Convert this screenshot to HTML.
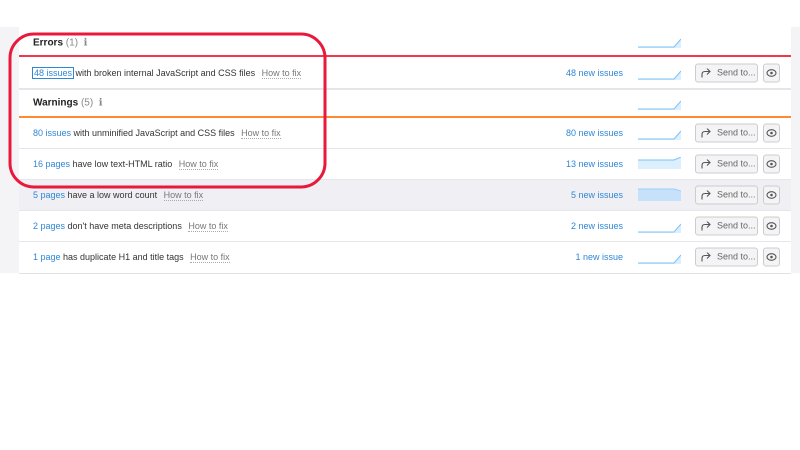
<!DOCTYPE html>
<html><head><style>
body{margin:0;width:800px;height:450px;background:#fff;font-family:"Liberation Sans",sans-serif;position:relative;overflow:hidden}
.bgL{position:absolute;left:0;top:27px;width:19px;height:246px;background:#f4f4f7}
.bgR{position:absolute;left:791px;top:27px;width:9px;height:246px;background:#f4f4f7}
.card{position:absolute;left:19px;top:27px;width:772px;height:246px;background:#fff;border-bottom:1px solid #e2e2e6}
.row{position:absolute;left:0;width:772px;font-size:9px;color:#333;border-bottom:1px solid #e6e6ea}
.row .t{position:absolute;left:14px;top:50%;transform:translateY(-50%);white-space:nowrap}
.b{color:#2f86d6}
.h{color:#777;border-bottom:1px dotted #aaa;margin-left:4px}
.n{position:absolute;right:168px;top:50%;transform:translateY(-50%);color:#2f86d6}
.sp{position:absolute;left:619px;top:50%;transform:translateY(-50%)}
.send{position:absolute;left:676px;top:50%;transform:translateY(-50%);width:61px;height:17px;border:1px solid #ccc;border-radius:3px;background:#f4f4f6;color:#666;font-size:9px;line-height:17px;box-sizing:content-box}
.send span{position:absolute;left:21px}
.eye{position:absolute;left:744px;top:50%;transform:translateY(-50%);width:15px;height:17px;border:1px solid #ccc;border-radius:3px;background:#f4f4f6}
.hd{font-weight:bold;font-size:10px;color:#222}
.hd i{font-weight:normal;color:#888;font-style:normal}
</style></head><body>
<div class="bgL"></div><div class="bgR"></div>
<div class="card">
 <div class="row" style="top:0;height:28px;border-bottom:2px solid #f4364c"><div class="t hd" style="top:58%">Errors <i>(1) &nbsp;ℹ</i></div>
  <svg class="sp" width="43" height="14"><path d="M0 13H36L43 5V14H0Z" fill="#dcefff"/><path d="M0 13H36L43 5" stroke="#7cc3f5" fill="none"/></svg></div>
 <div class="row" style="top:30px;height:31px;border-bottom:2px solid #e6e6ea"><div class="t"><span class="b" style="outline:1px solid #2f86d6;padding:0 1px">48 issues</span> with broken internal JavaScript and CSS files <span class="h">How to fix</span></div>
  <div class="n">48 new issues</div><svg class="sp" width="43" height="14"><path d="M0 13H36L43 5V14H0Z" fill="#dcefff"/><path d="M0 13H36L43 5" stroke="#7cc3f5" fill="none"/></svg>
  <div class="send"><svg style="position:absolute;left:5px;top:4px" width="10" height="9"><path d="M1 9V6Q1 3 4 3H9M6 0L9 3L6 6" stroke="#555" fill="none" stroke-width="1.1"/></svg><span>Send to...</span></div><div class="eye"><svg style="position:absolute;left:2px;top:4px" width="11" height="9"><ellipse cx="5.5" cy="4.5" rx="4.5" ry="3.3" stroke="#555" fill="none" stroke-width="1.1"/><circle cx="5.5" cy="4.5" r="1.3" fill="#555"/></svg></div></div>
 <div class="row" style="top:63px;height:26px;border-bottom:2px solid #ff8a30"><div class="t hd">Warnings <i>(5) &nbsp;ℹ</i></div>
  <svg class="sp" width="43" height="14"><path d="M0 13H36L43 5V14H0Z" fill="#dcefff"/><path d="M0 13H36L43 5" stroke="#7cc3f5" fill="none"/></svg></div>
 <div class="row" style="top:91px;height:30px"><div class="t"><span class="b">80 issues</span> with unminified JavaScript and CSS files <span class="h">How to fix</span></div>
  <div class="n">80 new issues</div><svg class="sp" width="43" height="14"><path d="M0 13H36L43 5V14H0Z" fill="#dcefff"/><path d="M0 13H36L43 5" stroke="#7cc3f5" fill="none"/></svg>
  <div class="send"><svg style="position:absolute;left:5px;top:4px" width="10" height="9"><path d="M1 9V6Q1 3 4 3H9M6 0L9 3L6 6" stroke="#555" fill="none" stroke-width="1.1"/></svg><span>Send to...</span></div><div class="eye"><svg style="position:absolute;left:2px;top:4px" width="11" height="9"><ellipse cx="5.5" cy="4.5" rx="4.5" ry="3.3" stroke="#555" fill="none" stroke-width="1.1"/><circle cx="5.5" cy="4.5" r="1.3" fill="#555"/></svg></div></div>
 <div class="row" style="top:122px;height:30px"><div class="t"><span class="b">16 pages</span> have low text-HTML ratio <span class="h">How to fix</span></div>
  <div class="n">13 new issues</div><svg class="sp" width="43" height="14"><path d="M0 3H36L43 0V12H0Z" fill="#dcefff"/><path d="M0 3H36L43 0" stroke="#7cc3f5" fill="none"/></svg>
  <div class="send"><svg style="position:absolute;left:5px;top:4px" width="10" height="9"><path d="M1 9V6Q1 3 4 3H9M6 0L9 3L6 6" stroke="#555" fill="none" stroke-width="1.1"/></svg><span>Send to...</span></div><div class="eye"><svg style="position:absolute;left:2px;top:4px" width="11" height="9"><ellipse cx="5.5" cy="4.5" rx="4.5" ry="3.3" stroke="#555" fill="none" stroke-width="1.1"/><circle cx="5.5" cy="4.5" r="1.3" fill="#555"/></svg></div></div>
 <div class="row" style="top:153px;height:30px;background:#f0f0f4"><div class="t"><span class="b">5 pages</span> have a low word count <span class="h">How to fix</span></div>
  <div class="n">5 new issues</div><svg class="sp" width="43" height="14"><path d="M0 1H36L43 3V13H0Z" fill="#c6e2fa"/><path d="M0 1H36L43 3" stroke="#9ccff5" fill="none"/></svg>
  <div class="send"><svg style="position:absolute;left:5px;top:4px" width="10" height="9"><path d="M1 9V6Q1 3 4 3H9M6 0L9 3L6 6" stroke="#555" fill="none" stroke-width="1.1"/></svg><span>Send to...</span></div><div class="eye"><svg style="position:absolute;left:2px;top:4px" width="11" height="9"><ellipse cx="5.5" cy="4.5" rx="4.5" ry="3.3" stroke="#555" fill="none" stroke-width="1.1"/><circle cx="5.5" cy="4.5" r="1.3" fill="#555"/></svg></div></div>
 <div class="row" style="top:184px;height:30px"><div class="t"><span class="b">2 pages</span> don't have meta descriptions <span class="h">How to fix</span></div>
  <div class="n">2 new issues</div><svg class="sp" width="43" height="14"><path d="M0 13H36L43 5V14H0Z" fill="#dcefff"/><path d="M0 13H36L43 5" stroke="#7cc3f5" fill="none"/></svg>
  <div class="send"><svg style="position:absolute;left:5px;top:4px" width="10" height="9"><path d="M1 9V6Q1 3 4 3H9M6 0L9 3L6 6" stroke="#555" fill="none" stroke-width="1.1"/></svg><span>Send to...</span></div><div class="eye"><svg style="position:absolute;left:2px;top:4px" width="11" height="9"><ellipse cx="5.5" cy="4.5" rx="4.5" ry="3.3" stroke="#555" fill="none" stroke-width="1.1"/><circle cx="5.5" cy="4.5" r="1.3" fill="#555"/></svg></div></div>
 <div class="row" style="top:215px;height:30px;border-bottom:none"><div class="t"><span class="b">1 page</span> has duplicate H1 and title tags <span class="h">How to fix</span></div>
  <div class="n">1 new issue</div><svg class="sp" width="43" height="14"><path d="M0 13H36L43 5V14H0Z" fill="#dcefff"/><path d="M0 13H36L43 5" stroke="#7cc3f5" fill="none"/></svg>
  <div class="send"><svg style="position:absolute;left:5px;top:4px" width="10" height="9"><path d="M1 9V6Q1 3 4 3H9M6 0L9 3L6 6" stroke="#555" fill="none" stroke-width="1.1"/></svg><span>Send to...</span></div><div class="eye"><svg style="position:absolute;left:2px;top:4px" width="11" height="9"><ellipse cx="5.5" cy="4.5" rx="4.5" ry="3.3" stroke="#555" fill="none" stroke-width="1.1"/><circle cx="5.5" cy="4.5" r="1.3" fill="#555"/></svg></div></div>
</div>
<svg style="position:absolute;left:0;top:0" width="800" height="450"><rect x="10" y="34" width="315" height="153" rx="24" fill="none" stroke="#e8193a" stroke-width="3"/></svg>
</body></html>
